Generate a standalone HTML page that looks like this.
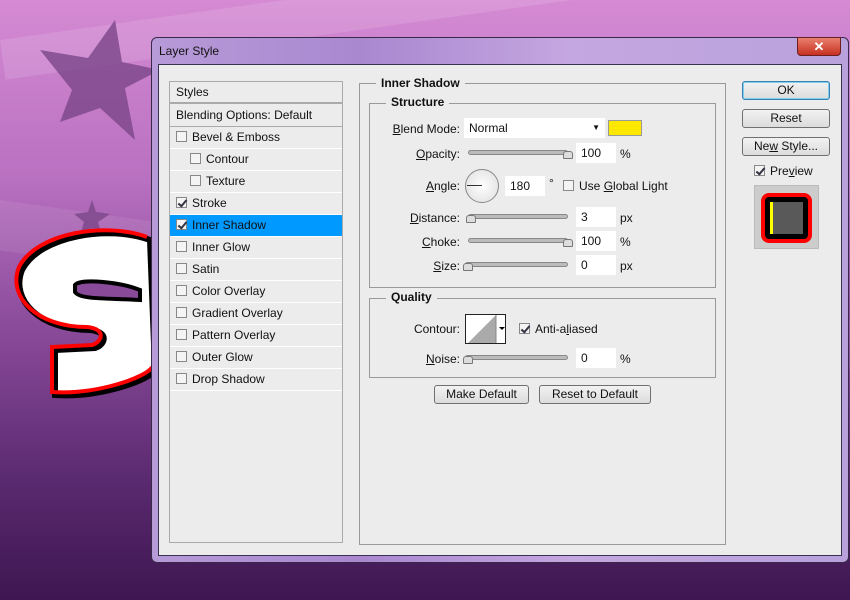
<!DOCTYPE html>
<html><head><style>
*{margin:0;padding:0;box-sizing:border-box}
body{width:850px;height:600px;overflow:hidden;position:relative;font-family:"Liberation Sans",sans-serif;font-size:12px;color:#111;
background:linear-gradient(180deg,#d58ad3 0%,#b870c0 30%,#8a4a9a 55%,#5a2a70 80%,#3e1650 100%);}
.abs{position:absolute}
.stripe{position:absolute;background:rgba(255,255,255,.12);transform-origin:0 0}
.win{left:151px;top:37px;width:698px;height:526px;border:1px solid #3a2a4a;border-radius:6px;background:linear-gradient(90deg,#b79ad8,#a988d0 30%,#c4a6e0 60%,#b9a2dc);}
.client{left:158px;top:64px;width:684px;height:492px;background:#ececec;border:1px solid #3a3050}
.lp{left:169px;top:81px;width:174px;height:462px;border:1px solid #aaa;background:#ececec}
.row{position:absolute;left:0;width:172px;height:22px;border-bottom:1px solid #fff;line-height:21px}
.cb{display:inline-block;width:11px;height:11px;border:1px solid #888;background:#f4f4f4;vertical-align:-1px;margin-right:5px;position:relative}
.cb.on::after{content:"";position:absolute;left:3px;top:0px;width:3px;height:7px;border:solid #334;border-width:0 2px 2px 0;transform:rotate(40deg)}
.grp{border:1px solid #999}
.lbl{position:absolute;text-align:right;width:100px}
.lbl u{text-decoration:underline}
.in{position:absolute;background:#fff;height:20px;line-height:20px;padding-left:5px}
.sl{position:absolute;height:5px;border:1px solid #888;border-radius:3px;background:#bbb}
.th{position:absolute;width:10px;height:8px;background:#ddd;border:1px solid #777;border-radius:3px 3px 1px 1px}
.btn{position:absolute;height:19px;border:1px solid #707070;border-radius:3px;background:linear-gradient(#f2f2f2,#dcdcdc);text-align:center;line-height:17px}
</style></head><body>
<div class="stripe" style="left:0;top:40px;width:900px;height:40px;transform:rotate(-8deg)"></div>
<div class="stripe" style="left:0;top:200px;width:900px;height:50px;transform:rotate(8deg);background:rgba(255,255,255,.08)"></div>
<svg class="abs" style="left:0;top:0" width="160" height="600">
<polygon points="115,20 122,62 160,70 125,88 135,140 100,108 60,122 72,90 40,50 88,58" fill="#7a4688" opacity=".8"/>
<polygon points="92,200 96,212 110,214 98,222 102,236 92,228 80,236 84,222 74,214 88,212" fill="#7a4688" opacity=".8"/>
<path d="M150,240 C110,225 40,235 22,270 C10,300 40,330 90,330 C110,332 105,345 95,348 L55,350 L55,395 C100,398 150,380 155,370 Z" fill="#fff" stroke="#000" stroke-width="6"/>
<path d="M150,240 C110,225 40,235 22,270 C10,300 40,330 90,330 C110,332 105,345 95,348 L55,350 L55,395 C100,398 150,380 155,370" fill="none" stroke="#f00" stroke-width="4" transform="translate(-3,-3)"/>
<path d="M75,285 C80,278 120,282 140,290 L140,300 C110,298 80,300 75,292Z" fill="#8a4a9a" stroke="#000" stroke-width="4"/>
</svg>
<div class="abs win"></div>
<div class="abs" style="left:159px;top:44px;font-size:12px;color:#111">Layer Style</div>
<div class="abs" style="left:797px;top:37px;width:44px;height:19px;border:1px solid #6a2020;border-radius:0 0 4px 4px;background:linear-gradient(#e88070,#c83020);color:#fff;font-weight:bold;text-align:center;line-height:17px;font-size:13px">✕</div>
<div class="abs client"></div>
<div class="abs lp">
<div class="row" style="top:0;padding-left:6px;border-bottom:2px solid #aaa">Styles</div>
<div class="row" style="top:23px;padding-left:6px;border-bottom:1px solid #aaa">Blending Options: Default</div>
<div class="row" style="top:45px;padding-left:6px"><span class="cb"></span>Bevel &amp; Emboss</div>
<div class="row" style="top:67px;padding-left:20px"><span class="cb"></span>Contour</div>
<div class="row" style="top:89px;padding-left:20px"><span class="cb"></span>Texture</div>
<div class="row" style="top:111px;padding-left:6px"><span class="cb on"></span>Stroke</div>
<div class="row" style="top:133px;padding-left:6px;background:#0099ff"><span class="cb on"></span>Inner Shadow</div>
<div class="row" style="top:155px;padding-left:6px"><span class="cb"></span>Inner Glow</div>
<div class="row" style="top:177px;padding-left:6px"><span class="cb"></span>Satin</div>
<div class="row" style="top:199px;padding-left:6px"><span class="cb"></span>Color Overlay</div>
<div class="row" style="top:221px;padding-left:6px"><span class="cb"></span>Gradient Overlay</div>
<div class="row" style="top:243px;padding-left:6px"><span class="cb"></span>Pattern Overlay</div>
<div class="row" style="top:265px;padding-left:6px"><span class="cb"></span>Outer Glow</div>
<div class="row" style="top:287px;padding-left:6px"><span class="cb"></span>Drop Shadow</div>
</div>
<div class="abs grp" style="left:359px;top:83px;width:367px;height:462px"></div>
<div class="abs" style="left:376px;top:76px;background:#ececec;padding:0 5px;font-weight:bold">Inner Shadow</div>
<div class="abs grp" style="left:369px;top:103px;width:347px;height:185px"></div>
<div class="abs" style="left:386px;top:95px;background:#ececec;padding:0 5px;font-weight:bold">Structure</div>
<div class="lbl" style="left:360px;top:122px"><u>B</u>lend Mode:</div>
<div class="in" style="left:464px;top:118px;width:141px">Normal<span style="position:absolute;right:5px;font-size:8px">▼</span></div>
<div class="abs" style="left:608px;top:120px;width:34px;height:16px;background:#ffe800;border:1px solid #999"></div>
<div class="lbl" style="left:360px;top:147px"><u>O</u>pacity:</div>
<div class="sl" style="left:468px;top:150px;width:100px"></div><div class="th" style="left:563px;top:151px"></div>
<div class="in" style="left:576px;top:143px;width:40px">100</div><div class="abs" style="left:620px;top:147px">%</div>
<div class="lbl" style="left:360px;top:179px"><u>A</u>ngle:</div>
<div class="abs" style="left:465px;top:169px;width:34px;height:34px;border:1px solid #888;border-radius:50%;background:radial-gradient(#fff,#ddd)"></div>
<div class="abs" style="left:467px;top:185px;width:15px;height:1px;background:#333"></div>
<div class="in" style="left:505px;top:176px;width:40px">180</div><div class="abs" style="left:549px;top:176px">°</div>
<div class="abs" style="left:563px;top:179px"><span class="cb"></span>Use <u>G</u>lobal Light</div>
<div class="lbl" style="left:360px;top:211px"><u>D</u>istance:</div>
<div class="sl" style="left:468px;top:214px;width:100px"></div><div class="th" style="left:466px;top:215px"></div>
<div class="in" style="left:576px;top:207px;width:40px">3</div><div class="abs" style="left:620px;top:211px">px</div>
<div class="lbl" style="left:360px;top:235px"><u>C</u>hoke:</div>
<div class="sl" style="left:468px;top:238px;width:100px"></div><div class="th" style="left:563px;top:239px"></div>
<div class="in" style="left:576px;top:231px;width:40px">100</div><div class="abs" style="left:620px;top:235px">%</div>
<div class="lbl" style="left:360px;top:259px"><u>S</u>ize:</div>
<div class="sl" style="left:465px;top:262px;width:103px"></div><div class="th" style="left:463px;top:263px"></div>
<div class="in" style="left:576px;top:255px;width:40px">0</div><div class="abs" style="left:620px;top:259px">px</div>
<div class="abs grp" style="left:369px;top:298px;width:347px;height:80px"></div>
<div class="abs" style="left:386px;top:290px;background:#ececec;padding:0 5px;font-weight:bold">Quality</div>
<div class="lbl" style="left:360px;top:322px">Contour:</div>
<div class="abs" style="left:465px;top:314px;width:41px;height:30px;border:1px solid #222;background:#fff;overflow:hidden">
<svg width="41" height="30"><polygon points="0,30 30,0 30,30" fill="#aaa"/><line x1="30" y1="0" x2="30" y2="30" stroke="#888"/><polygon points="33,12 39,12 36,15" fill="#000"/></svg></div>
<div class="abs" style="left:519px;top:322px"><span class="cb on"></span>Anti-a<u>l</u>iased</div>
<div class="lbl" style="left:360px;top:352px"><u>N</u>oise:</div>
<div class="sl" style="left:465px;top:355px;width:103px"></div><div class="th" style="left:463px;top:356px"></div>
<div class="in" style="left:576px;top:348px;width:40px">0</div><div class="abs" style="left:620px;top:352px">%</div>
<div class="btn" style="left:434px;top:385px;width:95px">Make Default</div>
<div class="btn" style="left:539px;top:385px;width:112px">Reset to Default</div>
<div class="btn" style="left:742px;top:81px;width:88px;border-color:#3c7fb1;box-shadow:inset 0 0 0 1px #7fd0f0">OK</div>
<div class="btn" style="left:742px;top:109px;width:88px">Reset</div>
<div class="btn" style="left:742px;top:137px;width:88px">Ne<u>w</u> Style...</div>
<div class="abs" style="left:754px;top:164px"><span class="cb on"></span>Pre<u>v</u>iew</div>
<div class="abs" style="left:754px;top:185px;width:65px;height:64px;background:#ccc;border:1px solid #bbb"></div>
<div class="abs" style="left:761px;top:193px;width:51px;height:50px;background:#f00;border-radius:8px"></div>
<div class="abs" style="left:765px;top:197px;width:43px;height:42px;background:#000;border-radius:4px"></div>
<div class="abs" style="left:770px;top:202px;width:33px;height:32px;background:#595959;border-left:3px solid #ff0"></div>
</body></html>
